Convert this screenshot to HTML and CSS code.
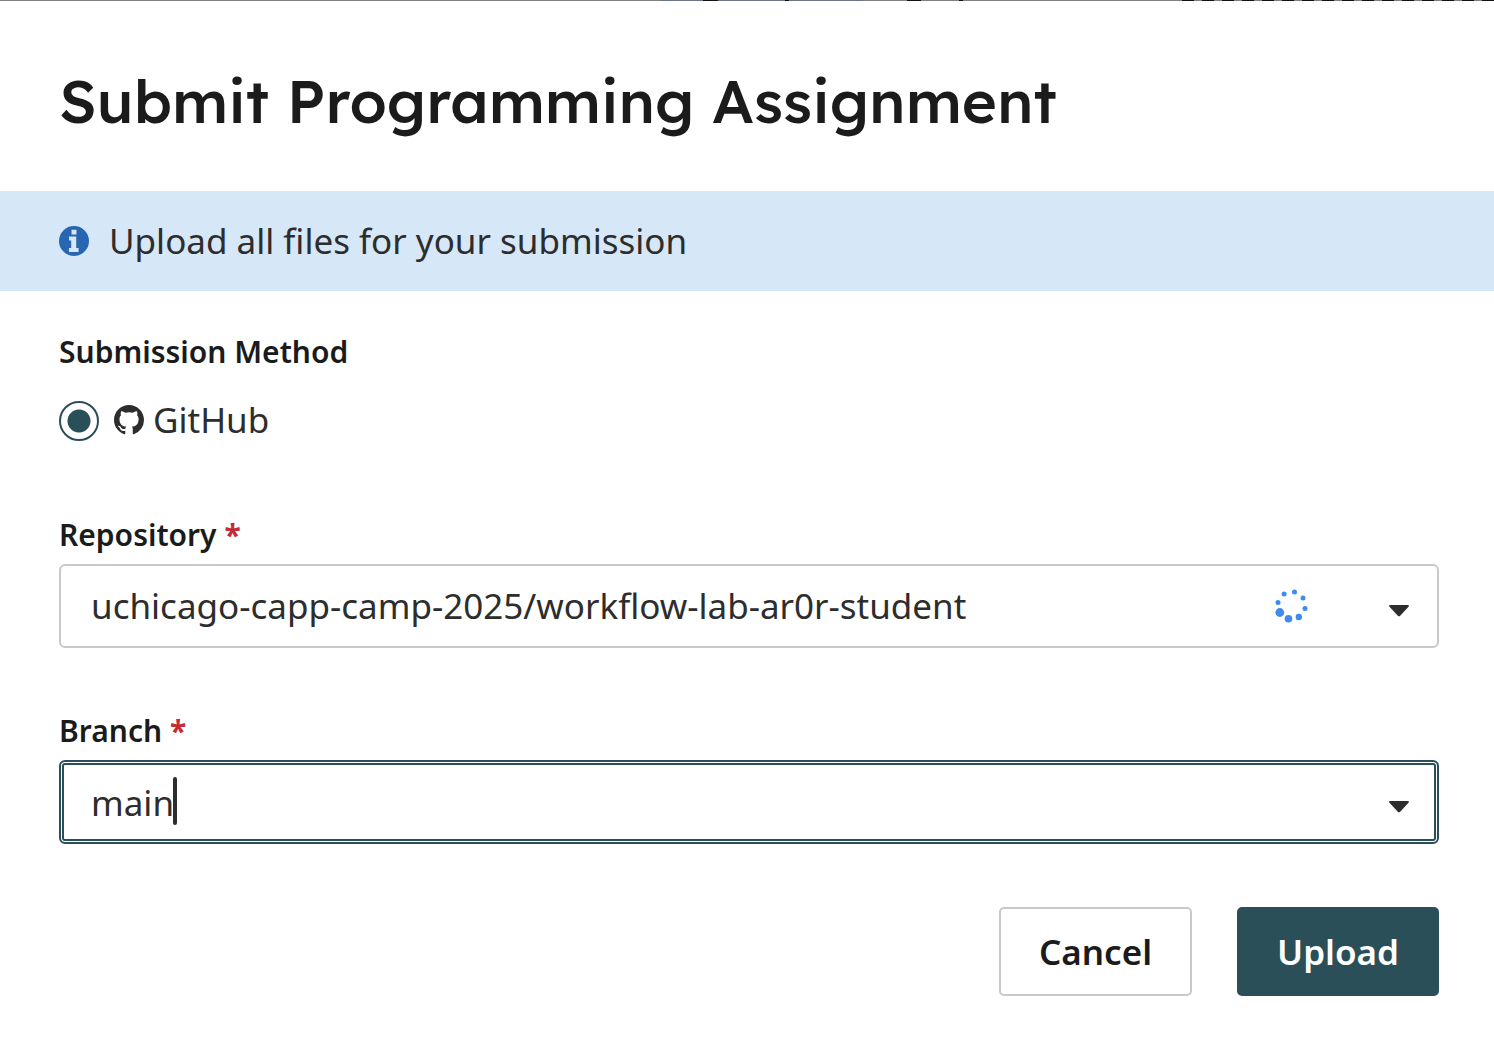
FILE: index.html
```html
<!DOCTYPE html>
<html lang="en">
<head>
<meta charset="utf-8">
<meta name="viewport" content="width=device-width, initial-scale=1">
<title>Submit Programming Assignment</title>
<link rel="stylesheet" href="styles.css">
</head>
<body>
<div class="backdrop-edge"></div>
<main class="dialog" role="dialog" aria-labelledby="dialog-title">
  <header class="dialog-header">
    <h1 class="dialog-title" id="dialog-title">Submit Programming Assignment</h1>
  </header>
  <div class="notice" role="status">
    <svg class="notice-icon" viewBox="0 0 512 512" aria-hidden="true"><path fill="currentColor" d="M256 0a256 256 0 1 0 0 512a256 256 0 1 0 0-512zm-42 66h84v80h-84zM172 180h122v196h40v66H170v-66h38V246h-36z" fill-rule="evenodd"/></svg>
    <p class="notice-text">Upload all files for your submission</p>
  </div>
  <form class="form">
    <fieldset class="method">
      <legend class="label">Submission Method</legend>
      <label class="method-option" for="method-github">
        <input class="radio" type="radio" id="method-github" name="method" checked>
        <svg class="github-icon" viewBox="0 0 16 16" aria-hidden="true"><path fill="currentColor" d="M8 0C3.580 0 0 3.580 0 8c0 3.540 2.290 6.530 5.470 7.590.4.070.55-.17.55-.38 0-.19-.010-.82-.010-1.490-2.010.37-2.530-.49-2.690-.94-.09-.23-.48-.94-.82-1.130-.28-.15-.68-.52-.010-.53.63-.010 1.080.58 1.230.82.72 1.210 1.870.87 2.330.66.070-.52.28-.87.510-1.070-1.780-.2-3.640-.89-3.640-3.950 0-.87.310-1.590.82-2.150-.08-.2-.36-1.020.08-2.120 0 0 .67-.21 2.200.82.640-.18 1.320-.27 2-.27s1.360.09 2 .27c1.530-1.040 2.200-.82 2.200-.82.440 1.100.160 1.920.080 2.120.510.560.820 1.270.820 2.150 0 3.070-1.870 3.750-3.650 3.950.290.250.540.730.540 1.480 0 1.070-.010 1.930-.010 2.200 0 .210.150.460.550.380A8.013 8.013 0 0 0 16 8c0-4.420-3.580-8-8-8z"/></svg>
        <span>GitHub</span>
      </label>
    </fieldset>

    <div class="field">
      <label class="label" for="repository">Repository <span class="required">*</span></label>
      <div class="control">
        <select class="input" id="repository" required>
          <option>uchicago-capp-camp-2025/workflow-lab-ar0r-student</option>
        </select>
        <div class="adornments">
          <svg class="spinner" viewBox="0 0 34 34" aria-hidden="true"><g fill="currentColor"><circle cx="19.500" cy="3" r="2.500"/><circle cx="28" cy="9" r="2.500"/><circle cx="30" cy="19.500" r="2.500"/><circle cx="23.800" cy="28" r="3.200"/><circle cx="13.500" cy="29.800" r="3.800"/><circle cx="4.800" cy="23.500" r="4.400"/><circle cx="3" cy="13.500" r="2.500"/><circle cx="9.100" cy="5" r="2.500"/></g></svg>
          <svg class="arrow" viewBox="0 0 20 12" aria-hidden="true"><path fill="currentColor" d="M1 0h18q1.500.500.500 1.700l-8.300 9q-1.200 1.200-2.400 0L.5 1.700Q-.5.500 1 0z"/></svg>
        </div>
      </div>
    </div>

    <div class="field">
      <label class="label" for="branch">Branch <span class="required">*</span></label>
      <div class="control">
        <input class="input input-active" type="text" id="branch" value="main" role="combobox" aria-expanded="false" autocomplete="off" required>
        <span class="caret"></span>
        <div class="adornments">
          <svg class="arrow" viewBox="0 0 20 12" aria-hidden="true"><path fill="currentColor" d="M1 0h18q1.500.500.500 1.700l-8.300 9q-1.200 1.200-2.400 0L.5 1.700Q-.5.500 1 0z"/></svg>
        </div>
      </div>
    </div>

    <div class="actions">
      <button class="button" type="button">Cancel</button>
      <button class="button button-primary" type="submit">Upload</button>
    </div>
  </form>
</main>
</body>
</html>
```
FILE: styles.css
```css
* {
  box-sizing: border-box;
}

body {
  margin: 0;
  background: #fff;
  color: #2d2d2d;
  font-family: "Noto Sans", sans-serif;
  font-size: 35px;
  line-height: 48px;
}

/* Sliver of the dimmed page above the dialog */
.backdrop-edge {
  height: 1px;
  background:
    repeating-linear-gradient(90deg, #151015 0 12px, #808080 12px 20px) 1182px 0 / 312px 1px no-repeat,
    linear-gradient(#151015, #151015) 703px 0 / 15px 1px no-repeat,
    linear-gradient(#151015, #151015) 785px 0 / 4px 1px no-repeat,
    linear-gradient(#151015, #151015) 907px 0 / 14px 1px no-repeat,
    linear-gradient(#151015, #151015) 959px 0 / 4px 1px no-repeat,
    linear-gradient(#6b7684, #6b7684) 661px 0 / 202px 1px no-repeat,
    #808080;
}

.dialog-header {
  padding: 60px 56px 50px 59px;
}

.dialog-title {
  margin: 0;
  color: #1b1b1b;
  font-family: Lexend, Inter, sans-serif;
  font-size: 60px;
  font-weight: 500;
  line-height: 80px;
}

.notice {
  display: flex;
  align-items: center;
  gap: 20px;
  padding: 26px 59px;
  background: #d6e7f7;
}

.notice-icon {
  width: 30px;
  height: 30px;
  color: #2966b1;
}

.notice-text {
  margin: 0;
}

.form {
  padding: 41px 55px 56px 59px;
}

.label {
  display: block;
  padding: 0;
  color: #1b1b1b;
  font-size: 30px;
  font-weight: 600;
  line-height: 40px;
}

.required {
  color: #c52a36;
  font-weight: 700;
}

.method {
  margin: 0;
  padding: 0;
  border: 0;
}

.method-option {
  display: flex;
  align-items: center;
  width: max-content;
  margin-top: 24px;
}

.radio {
  appearance: none;
  width: 40px;
  height: 40px;
  margin: 2px 15px 0 0;
  border: 2px solid #2b4f58;
  border-radius: 50%;
  background: radial-gradient(circle, #2b4f58 11px, transparent 12px);
}

.github-icon {
  width: 30px;
  height: 30px;
  margin-right: 9px;
}

.field {
  margin-top: 71px;
}

.field + .field {
  margin-top: 63px;
}

.control {
  position: relative;
  margin-top: 9px;
}

.input {
  appearance: none;
  display: block;
  width: 100%;
  height: 84px;
  padding: 0 200px 0 30px;
  border: 2px solid #c9c9c9;
  border-radius: 6px;
  outline: none;
  background: #fff;
  color: inherit;
  font: inherit;
}

.input-active {
  border: 5px double #2b4f58;
  padding-left: 27px;
}

.adornments {
  position: absolute;
  inset: 0 30px 0 auto;
  display: flex;
  align-items: center;
  gap: 80px;
  pointer-events: none;
}

.spinner {
  width: 34px;
  height: 34px;
  color: #3d8bef;
}

.arrow {
  width: 20px;
  height: 12px;
  margin-top: 10px;
}

.caret {
  position: absolute;
  top: 17px;
  left: 114px;
  width: 4px;
  height: 48px;
  border-radius: 2px;
  background: #2d2d2d;
}

.actions {
  display: flex;
  justify-content: flex-end;
  gap: 45px;
  margin-top: 63px;
}

.button {
  padding: 18px 38px;
  border: 2px solid #c9c9c9;
  border-radius: 5px;
  background: #fff;
  color: #1b1b1b;
  font: inherit;
  font-weight: 600;
  line-height: 49px;
}

.button-primary {
  border-color: #2b4f58;
  background: #2b4f58;
  color: #fff;
}
```
